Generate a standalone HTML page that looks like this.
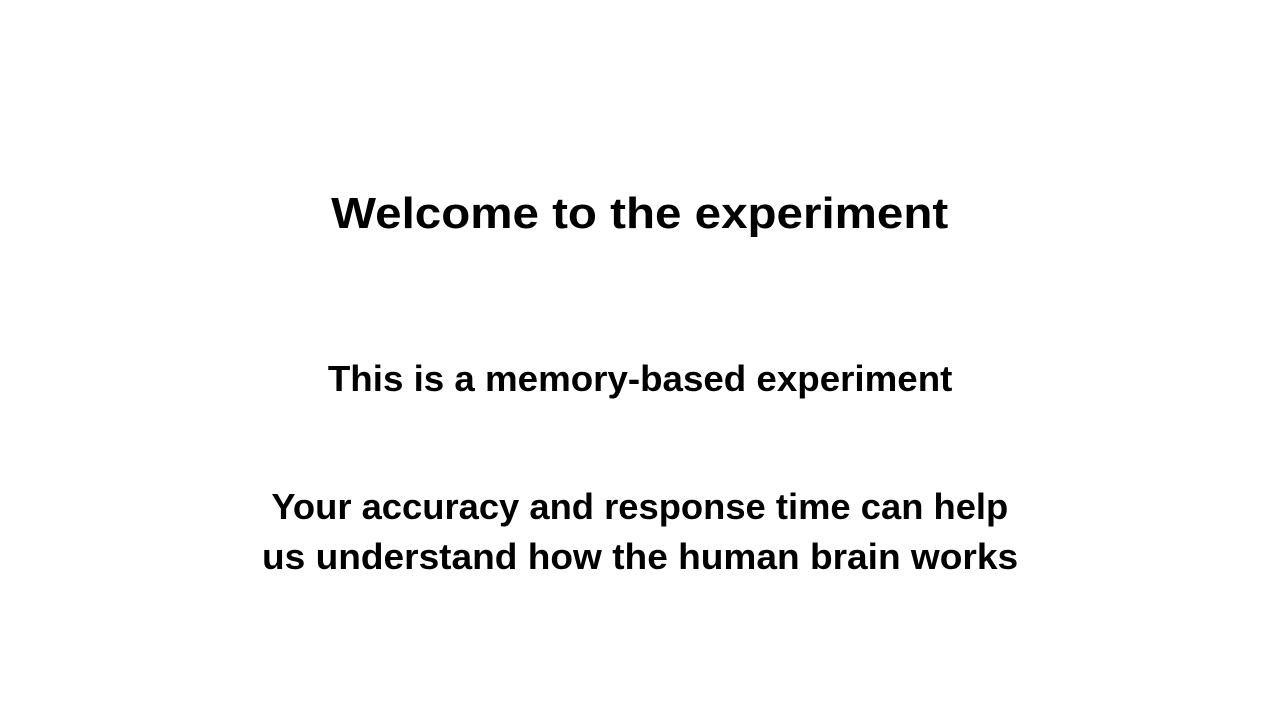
<!DOCTYPE html>
<html><head><meta charset="utf-8"><style>
html,body{margin:0;padding:0;background:#fff;width:1280px;height:720px;overflow:hidden}
.l{position:absolute;left:0;width:1280px;text-align:center;font-family:"Liberation Sans",sans-serif;font-weight:bold;color:#000;line-height:1;white-space:nowrap}
.l span{display:inline-block;transform-origin:center}
</style></head><body>
<div class="l" style="top:192px;font-size:44px"><span style="transform:scaleX(1.08)">Welcome to the experiment</span></div>
<div class="l" style="top:361px;font-size:36px"><span style="transform:scaleX(1.02)">This is a memory-based experiment</span></div>
<div class="l" style="top:489px;font-size:36px"><span style="transform:scaleX(1.01)">Your accuracy and response time can help</span></div>
<div class="l" style="top:539px;font-size:36px"><span style="transform:scaleX(1.03)">us understand how the human brain works</span></div>
</body></html>
